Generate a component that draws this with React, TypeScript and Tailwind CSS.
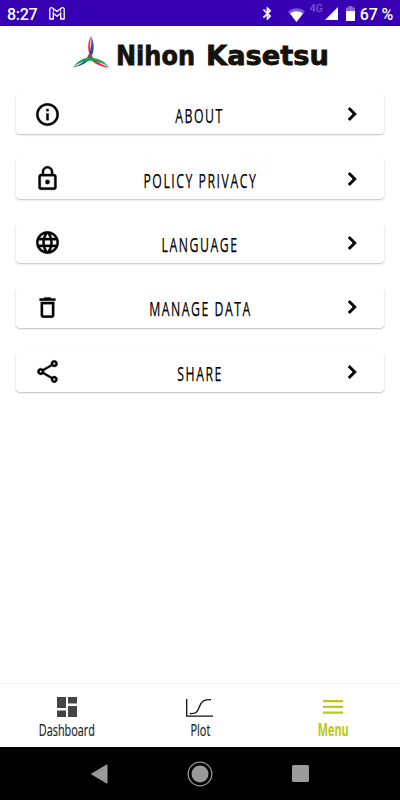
import type { ReactNode } from 'react'
import type { IconType } from 'react-icons'
import {
  MdBluetooth,
  MdChevronRight,
  MdDeleteOutline,
  MdInfoOutline,
  MdLanguage,
  MdLockOutline,
  MdOutlineShare,
} from 'react-icons/md'

interface MenuItem {
  label: string
  icon: IconType
}

const menuItems: MenuItem[] = [
  { label: 'ABOUT', icon: MdInfoOutline },
  { label: 'POLICY PRIVACY', icon: MdLockOutline },
  { label: 'LANGUAGE', icon: MdLanguage },
  { label: 'MANAGE DATA', icon: MdDeleteOutline },
  { label: 'SHARE', icon: MdOutlineShare },
]

// Material icons carry an unfilled 24x24 bounding path that must stay unstroked
const noBox = '[&>path[fill=none]]:stroke-none'

function StatusBar() {
  return (
    <div className="flex h-[26px] shrink-0 items-center bg-[#3700b3] pl-[7px] pr-[7px] pt-[3px] font-['Roboto',sans-serif] text-[16px] font-medium text-white">
      <span className="tracking-[-0.3px]">8:27</span>
      <svg className="mb-[2px] ml-[12px]" width="16" height="13" viewBox="0 0 16 13" fill="none" stroke="#fff" strokeWidth="1.3" strokeLinejoin="round">
        <path d="M.8 2.200C.8.700 2.500.200 3.500 1L8 4.500 12.500 1c1-.8 2.700-.3 2.700 1.200V12h-3.500V6.500L8 9.300 4.300 6.500V12H.8z" />
        <path d="M4.300 6.500V2M11.700 6.500V2" strokeWidth=".8" />
      </svg>
      <MdBluetooth className={`mb-[2px] ml-auto mr-[13px] ${noBox}`} size={15} stroke="#fff" strokeWidth={0.8} />
      <svg className="mr-[5px]" width="17" height="14" viewBox="0 0 17 14" fill="#fff">
        <path d="M0 3.500C5-1 12-1 17 3.500L8.500 14z" opacity=".35" />
        <path d="M2 5.500c4-3 9-3 13 0L8.500 14z" />
      </svg>
      <span className="mb-[11px] mr-[2px] text-[10.500px] leading-none text-white/35">4G</span>
      <svg className="mb-[3px] mr-[8px]" width="13" height="13" viewBox="0 0 13 13" fill="#fff">
        <path d="M13 0v13H0z" />
      </svg>
      <svg className="mb-[2px] mr-[5px]" width="9" height="15" viewBox="0 0 9 15" fill="#fff">
        <path d="M2.500 0h4v1.500H9V5H0V1.500h2.500z" opacity=".4" />
        <path d="M0 5h9v9.200a.8.8 0 0 1-.8.800H.8a.8.8 0 0 1-.8-.8z" />
      </svg>
      <span className="whitespace-nowrap tracking-[-0.2px]">67 %</span>
    </div>
  )
}

/** Three-bladed mark followed by the company name */
function Logo() {
  return (
    <svg className="mx-auto block shrink-0" width="400" height="54" viewBox="0 0 400 54">
      <path d="M91 10c-3.500 6-4 14-.5 21l1.500-1.500c-1.800-6-2.200-13-1-19.500z" fill="#ee3a50" />
      <path d="M91 10c3.500 7 3.500 15 .5 20.500-3.500 6-9 9-18.500 11 7-3 12-6 15-11.500 3-6 4-12 3-20z" fill="#24529f" />
      <path d="M90 27c3 6 8 10 19 14.500-9-.5-18-5-20.500-11.500z" fill="#ee2745" />
      <path d="M73 41.500c5-7.500 12-10.500 20-9.500 7 .8 12 4 16 9.500-5-4-10-6-16-6.500-7-.7-13 1-20 6.500z" fill="#16a34a" />
      <g
        fontFamily="'DejaVu Sans', sans-serif"
        fontSize="27"
        fontWeight="700"
        fill="#15110d"
        stroke="#15110d"
        strokeWidth=".8"
      >
        <text x="116" y="39" textLength="79" lengthAdjust="spacingAndGlyphs">Nihon</text>
        <text x="206" y="39" textLength="123" lengthAdjust="spacingAndGlyphs">Kasetsu</text>
      </g>
    </svg>
  )
}

function MenuButton({ label, icon: Icon }: MenuItem) {
  return (
    <button className="flex h-[40.400px] items-center rounded-[4px] bg-white pl-[18px] pr-[19px] shadow-[0_1px_2px_rgba(0,0,0,0.26)]">
      <Icon className={noBox} size={27} stroke="currentColor" strokeWidth={0.3} />
      <span className="flex-1 text-center">
        <span className="inline-block translate-y-[2.500px] scale-x-[0.63] whitespace-nowrap text-[19.500px] font-medium leading-none tracking-[2.400px] [-webkit-text-stroke:0.250px]">
          {label}
        </span>
      </span>
      <MdChevronRight className={noBox} size={26} stroke="currentColor" strokeWidth={0.9} />
    </button>
  )
}

function NavTab({ label, active = false, children }: { label: string; active?: boolean; children: ReactNode }) {
  return (
    <div className={`flex flex-1 flex-col items-center pt-[12px] ${active ? 'font-bold text-[#bdca1c]' : 'font-medium text-[#222]'}`}>
      <div className="flex h-[22px] items-center">{children}</div>
      <span className="mt-[3px] scale-x-[0.64] text-[17px] leading-[18px] [-webkit-text-stroke:0.200px]">{label}</span>
    </div>
  )
}

export default function App() {
  return (
    <div className="flex h-[800px] w-[400px] flex-col overflow-hidden bg-white font-['Open_Sans',sans-serif] text-black">
      <StatusBar />
      <Logo />
      <main className="flex flex-1 flex-col gap-[24px] px-[16px] pt-[14px]">
        {menuItems.map((item) => (
          <MenuButton key={item.label} {...item} />
        ))}
      </main>

      <nav className="flex h-[64px] shrink-0 border-t border-[#f0f0f0]">
        <NavTab label="Dashboard">
          <svg width="20" height="20" viewBox="0 0 20 20" fill="#444">
            <path d="M0 0h9v11H0zM11 0h9v6.500h-9zM0 13.500h9V20H0zM11 9h9v11h-9z" />
          </svg>
        </NavTab>
        <NavTab label="Plot">
          <svg width="27" height="19" viewBox="0 0 27 19" fill="none" stroke="#111" strokeWidth="1.300">
            <path d="M.700 1v17.200H27" />
            <path d="M4 15.500c6 .5 7.500-1.500 9.500-7S18 1.700 25 1.700" />
          </svg>
        </NavTab>
        <NavTab label="Menu" active>
          <svg width="20" height="14" viewBox="0 0 20 14" fill="currentColor">
            <path d="M0 0h20v2.200H0zM0 5.800h20V8H0zM0 11.500h20v2.200H0z" />
          </svg>
        </NavTab>
      </nav>

      <div className="flex h-[53px] shrink-0 items-center justify-center gap-[79px] bg-black">
        <svg width="17" height="20" viewBox="0 0 17 20" fill="#9a9a9a">
          <path d="M16 .8v18.400L.5 10z" stroke="#9a9a9a" strokeLinejoin="round" />
        </svg>
        <svg width="26" height="26" viewBox="0 0 26 26">
          <circle cx="13" cy="13" r="11.800" fill="none" stroke="#9a9a9a" strokeWidth="1.300" />
          <circle cx="13" cy="13" r="8.500" fill="#9a9a9a" />
        </svg>
        <div className="size-[17px] rounded-[1.500px] bg-[#9a9a9a]" />
      </div>
    </div>
  )
}
